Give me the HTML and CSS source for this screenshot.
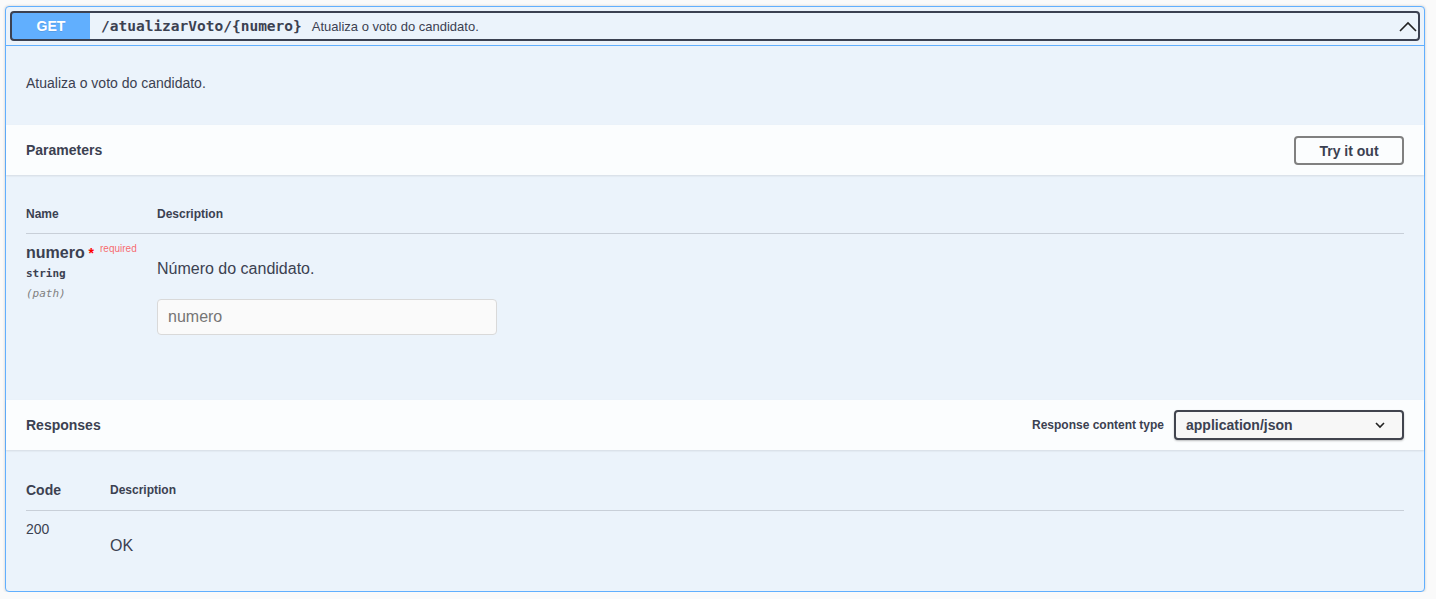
FILE: index.html
```html
<!DOCTYPE html>
<html lang="pt">
<head>
<meta charset="utf-8">
<title>atualizarVoto</title>
<link rel="stylesheet" href="styles.css">
</head>
<body>
<div class="opblock">
  <div class="summary">
    <div class="summary-control">
      <span class="method">GET</span>
      <span class="path">/atualizarVoto/{numero}</span>
      <span class="summary-desc">Atualiza o voto do candidato.</span>
      <svg class="arrow-up" width="20" height="20" viewBox="0 0 20 20"><path d="M2 15 L10 7 L18 15" fill="none" stroke="#222" stroke-width="1.6"/></svg>
    </div>
  </div>
  <div class="body">
    <div class="description">Atualiza o voto do candidato.</div>

    <div class="section-header">
      <h4 class="section-title">Parameters</h4>
      <button class="try-out">Try it out</button>
    </div>
    <div class="params">
      <div class="params-head">
        <div class="col-name th">Name</div>
        <div class="col-desc th">Description</div>
      </div>
      <div class="params-row">
        <div class="col-name">
          <div class="param-name">numero<span class="star">&nbsp;*</span><span class="req">required</span></div>
          <div class="param-type">string</div>
          <div class="param-in">(path)</div>
        </div>
        <div class="col-desc">
          <p class="param-desc">Número do candidato.</p>
          <input class="param-input" type="text" placeholder="numero">
        </div>
      </div>
    </div>

    <div class="section-header">
      <h4 class="section-title">Responses</h4>
      <div class="content-type">
        <span class="ct-label">Response content type</span>
        <div class="select">
          <span>application/json</span>
          <svg width="12" height="12" viewBox="0 0 12 12"><path d="M2 4 L6 8 L10 4" fill="none" stroke="#222" stroke-width="1.6"/></svg>
        </div>
      </div>
    </div>
    <div class="responses">
      <div class="resp-head">
        <div class="col-code th-code">Code</div>
        <div class="col-rdesc th">Description</div>
      </div>
      <div class="resp-row">
        <div class="col-code code">200</div>
        <div class="col-rdesc"><p class="resp-desc">OK</p></div>
      </div>
    </div>
  </div>
</div>
</body>
</html>
```

FILE: styles.css
```css
* { box-sizing: border-box; }
html, body { margin: 0; }
body {
  background: #fafafa;
  font-family: "Liberation Sans", Arial, sans-serif;
  color: #3b4151;
  padding: 6px 11px 0 5px;
}
.opblock {
  border: 1px solid #61affe;
  border-radius: 4px;
  background: #ebf3fb;
  box-shadow: 0 0 3px rgba(0,0,0,.19);
  height: 586px;
}
.summary {
  padding: 6px;
  border-bottom: 1px solid #61affe;
}
.summary-control {
  display: flex;
  align-items: center;
  height: 26px;
  outline: 2px solid #3b4151;
  border-radius: 2px;
  outline-offset: 0;
}
.method {
  width: 78px;
  height: 26px;
  background: #61affe;
  color: #fff;
  font-weight: bold;
  font-size: 14px;
  display: flex;
  align-items: center;
  justify-content: center;
  text-shadow: 0 1px 0 rgba(0,0,0,.1);
}
.path {
  font-family: "DejaVu Sans Mono", monospace;
  font-weight: bold;
  font-size: 14.5px;
  padding: 0 10px 0 11px;
  color: #3b4151;
}
.summary-desc {
  font-size: 13px;
  color: #3b4151;
  flex: 1;
}
.description {
  padding: 29px 20px 33px;
  font-size: 14px;
  line-height: 17px;
}
.section-header {
  height: 50px;
  padding: 0 20px;
  display: flex;
  align-items: center;
  justify-content: space-between;
  background: rgba(255,255,255,.8);
  box-shadow: 0 1px 2px rgba(0,0,0,.1);
  position: relative;
}
.section-title {
  margin: 0;
  font-size: 14px;
  font-weight: bold;
}
.try-out {
  width: 110px;
  height: 29px;
  border: 2px solid #808080;
  border-radius: 4px;
  background: transparent;
  font-family: "Liberation Sans", Arial, sans-serif;
  font-weight: bold;
  font-size: 14px;
  color: #3b4151;
  padding: 0;
  margin-top: 1px;
}
.params {
  height: 225px;
  padding: 20px 20px 0;
}
.params-head, .resp-head {
  display: flex;
  border-bottom: 1px solid rgba(59,65,81,.2);
}
.resp-head { align-items: center; }
.th {
  font-size: 12px;
  font-weight: bold;
  padding: 12px 0 11px;
  line-height: 15px;
}
.col-name { width: 131px; }
.col-desc { flex: 1; }
.params-row { display: flex; padding-top: 10px; }
.param-name {
  font-size: 16px;
  font-weight: bold;
  line-height: 18px;
}
.star { color: red; font-size: 14px; vertical-align: top; }
.req {
  color: rgba(255,0,0,.6);
  font-size: 10px;
  font-weight: normal;
  vertical-align: top;
  position: relative;
  top: -4px;
  margin-left: 6px;
}
.param-type {
  font-family: "DejaVu Sans Mono", monospace;
  font-size: 11px;
  font-weight: 600;
  line-height: 20px;
  margin-top: 2px;
}
.param-in {
  font-family: "DejaVu Sans Mono", monospace;
  font-size: 11px;
  font-style: italic;
  color: #808080;
  line-height: 20px;
}
.param-desc {
  margin: 16px 0 0;
  font-size: 16px;
  line-height: 18px;
}
.param-input {
  display: block;
  margin-top: 21px;
  width: 340px;
  height: 36px;
  border: 1px solid #d9d9d9;
  border-radius: 4px;
  background: #fafafa;
  padding: 8px 10px;
  font-family: "Liberation Sans", Arial, sans-serif;
  font-size: 16px;
  color: #3b4151;
}
.param-input::placeholder { color: #757575; }
.content-type {
  display: flex;
  align-items: center;
  gap: 10px;
}
.ct-label {
  font-size: 12px;
  font-weight: bold;
}
.select {
  width: 230px;
  height: 30px;
  border: 2px solid #41444e;
  border-radius: 4px;
  background: #f7f7f7;
  box-shadow: 0 1px 2px rgba(0,0,0,.25);
  display: flex;
  align-items: center;
  justify-content: space-between;
  padding: 0 16px 0 10px;
  font-size: 14px;
  font-weight: bold;
}
.responses {
  padding: 21px 20px 0;
}
.col-code { width: 84px; }
.col-rdesc { flex: 1; }
.th-code {
  font-size: 14px;
  font-weight: bold;
  padding: 11px 0 11px;
  line-height: 17px;
}
.resp-head .th { padding: 0; }
.resp-row { display: flex; padding-top: 10px; }
.code { font-size: 14px; line-height: 16px; }
.resp-desc {
  margin: 16px 0 0;
  font-size: 16px;
  line-height: 18px;
}
```
